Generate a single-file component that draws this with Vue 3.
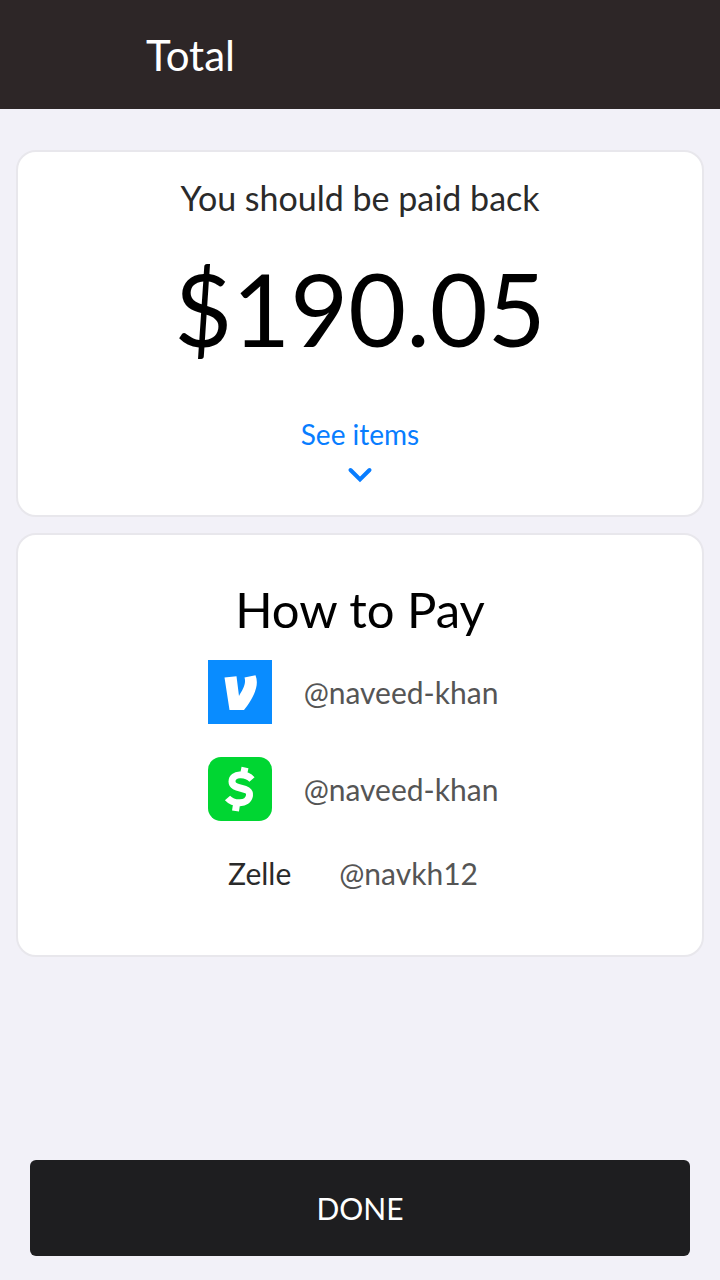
<script setup>
const wallets = [
  { id: 'venmo', handle: '@naveed-khan' },
  { id: 'cash', handle: '@naveed-khan' },
]
</script>

<template>
  <div class="screen">
    <header class="bar"><h1>Total</h1></header>
    <main>
      <section class="card summary">
        <p class="lead">You should be paid back</p>
        <p class="amount">$190.05</p>
        <button class="more" type="button">
          <span>See items</span>
          <svg width="26" height="18" viewBox="0 0 26 18" aria-hidden="true">
            <path d="M3.5 4L13 13.5L22.5 4" fill="none" stroke="#087dff" stroke-width="4" stroke-linecap="round" />
          </svg>
        </button>
      </section>
      <section class="card pay">
        <h2>How to Pay</h2>
        <ul>
          <li v-for="w in wallets" :key="w.id">
            <svg v-if="w.id === 'venmo'" width="64" height="64" viewBox="0 0 64 64" role="img" aria-label="Venmo">
              <rect width="64" height="64" fill="#098cff" />
              <path d="M16.500 17.500L28.500 16.300L31 36C34.500 30 38.500 24 36.500 17.500L47.500 15.300C52 26 44.500 39 36 50H21.500Z" fill="#fff" />
            </svg>
            <svg v-else width="64" height="64" viewBox="0 0 64 64" role="img" aria-label="Cash App">
              <rect width="64" height="64" rx="13" fill="#00d632" />
              <path d="M44 22.500C38 16 24 16 24 24.500C24 34 43 28.500 41.500 38.500C40 48.500 25 47 19.500 41M37 10.500L35 20M29 44L27.500 54" fill="none" stroke="#fff" stroke-width="7" />
            </svg>
            <span class="handle">{{ w.handle }}</span>
          </li>
        </ul>
        <div class="zelle"><span class="name">Zelle</span><span class="handle">@navkh12</span></div>
      </section>
    </main>
    <footer><button class="done" type="button">DONE</button></footer>
  </div>
</template>

<style>
body { background: #f2f1f8; }
</style>
<style scoped>
.screen { min-height: 100vh; display: flex; flex-direction: column; background: #f2f1f8; font-family: Lato, sans-serif; color: #000; }
.screen * { box-sizing: border-box; }
h1, h2, p, ul { margin: 0; padding: 0; font-weight: 400; }
.bar { padding: 30px 146px 29px; background: #2d2627; }
h1 { font-size: 42px; line-height: 50px; color: #fff; }
main { flex: 1; padding: 41px 16px 0; display: flex; flex-direction: column; gap: 16px; }
.card { border: 2px solid #e8e7ec; border-radius: 20px; background: #fff; display: flex; flex-direction: column; align-items: center; }
.summary { padding: 24px 0 31px; }
.lead { font-size: 34px; line-height: 44px; color: #2a2a2a; }
.amount { margin-top: 24px; font-size: 100px; line-height: 128px; }
.more { margin-top: 44px; padding: 0; border: 0; background: none; color: #087dff; font: 28px/36px Lato, sans-serif; display: flex; flex-direction: column; align-items: center; gap: 14px; }
svg { display: block; }
.pay { padding: 44px 0 64px; }
h2 { font-size: 49px; line-height: 60px; }
ul { margin-top: 21px; padding-right: 14px; list-style: none; display: flex; flex-direction: column; gap: 33px; }
li { display: flex; align-items: center; gap: 32px; }
.handle { font-size: 30px; line-height: 36px; color: #555; }
.zelle { margin-top: 34px; padding-right: 14px; display: flex; gap: 48px; }
.name { font-size: 30px; line-height: 36px; color: #2a2a2a; }
footer { padding: 0 30px 24px; }
.done { width: 100%; height: 96px; border: 0; border-radius: 6px; background: #1e1e20; color: #fff; font: 30px/36px Lato, sans-serif; }
</style>
